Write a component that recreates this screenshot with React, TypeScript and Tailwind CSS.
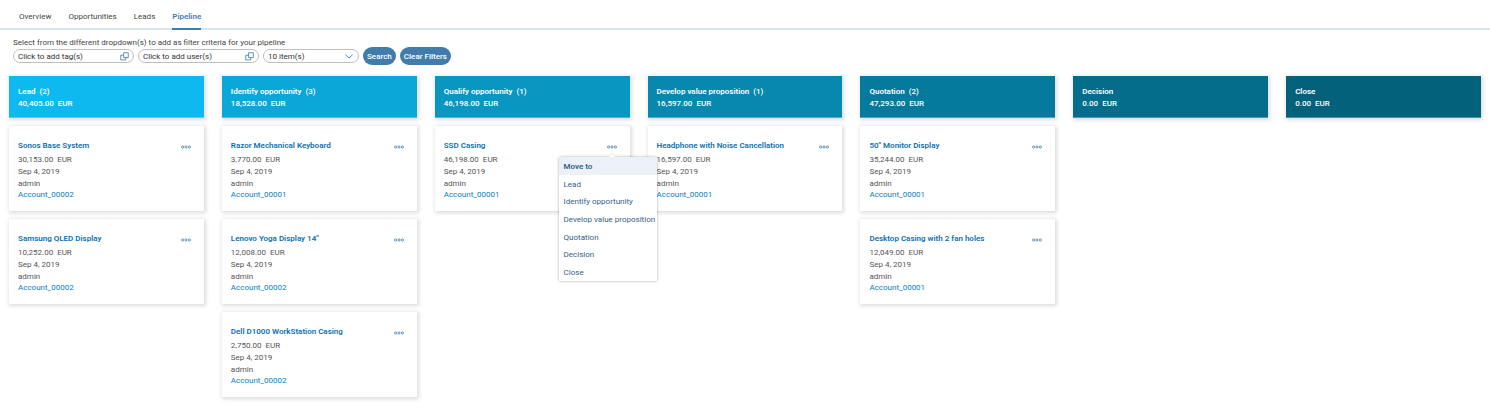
import React from "react";

type Deal = { name: string; amount: string; account: string; menuOpen?: boolean };
type Stage = { name: string; total: string; tone: string; deals: Deal[] };

const stages: Stage[] = [
  {
    name: "Lead",
    total: "40,405.00",
    tone: "bg-[#0db9ef]",
    deals: [
      { name: "Sonos Base System", amount: "30,153.00", account: "Account_00002" },
      { name: "Samsung QLED Display", amount: "10,252.00", account: "Account_00002" },
    ],
  },
  {
    name: "Identify opportunity",
    total: "18,528.00",
    tone: "bg-[#0ba7d8]",
    deals: [
      { name: "Razor Mechanical Keyboard", amount: "3,770.00", account: "Account_00001" },
      { name: 'Lenovo Yoga Display 14"', amount: "12,008.00", account: "Account_00002" },
      { name: "Dell D1000 WorkStation Casing", amount: "2,750.00", account: "Account_00002" },
    ],
  },
  {
    name: "Qualify opportunity",
    total: "46,198.00",
    tone: "bg-[#0996c1]",
    deals: [{ name: "SSD Casing", amount: "46,198.00", account: "Account_00001", menuOpen: true }],
  },
  {
    name: "Develop value proposition",
    total: "16,597.00",
    tone: "bg-[#0788ae]",
    deals: [{ name: "Headphone with Noise Cancellation", amount: "16,597.00", account: "Account_00001" }],
  },
  {
    name: "Quotation",
    total: "47,293.00",
    tone: "bg-[#067a9c]",
    deals: [
      { name: '50" Monitor Display', amount: "35,244.00", account: "Account_00001" },
      { name: "Desktop Casing with 2 fan holes", amount: "12,049.00", account: "Account_00001" },
    ],
  },
  { name: "Decision", total: "0.00", tone: "bg-[#056d8c]", deals: [] },
  { name: "Close", total: "0.00", tone: "bg-[#04617c]", deals: [] },
];

const tabs = ["Overview", "Opportunities", "Leads", "Pipeline"];
const targets = ["Lead", "Identify opportunity", "Develop value proposition", "Quotation", "Decision", "Close"];

function ValueHelpIcon() {
  return (
    <svg viewBox="0 0 10 10" className="size-[9px] text-[#427cac]" fill="none" stroke="currentColor" strokeWidth=".9">
      <path d="M4 .8h5.2v5.4H4z" />
      <path d="M4 3.6H.8v5.2h5.6V6.2" />
    </svg>
  );
}

function PickerField({ id, label }: { id: string; label: string }) {
  return (
    <div className="flex h-[14px] w-[121px] items-center rounded-full border border-[#bfbfbf] bg-white pr-1 pl-1">
      <input
        id={id}
        aria-label={label}
        placeholder={label}
        className="min-w-0 flex-1 bg-transparent pt-px text-[8px] leading-3 outline-none placeholder:text-[#333]"
      />
      <button type="button" aria-label={`Browse: ${label}`}>
        <ValueHelpIcon />
      </button>
    </div>
  );
}

function MoveMenu() {
  return (
    <div
      role="menu"
      className="absolute top-3 -left-12 z-10 grid h-[124px] w-[98px] grid-cols-1 grid-rows-7 rounded-xs bg-white text-[8px] text-[#346187] shadow-[0_0_3px_rgba(0,0,0,0.35)]"
    >
      <svg viewBox="0 0 8 4" className="absolute -top-1 left-[49px] h-1 w-2">
        <path d="M0 4 4 .5 8 4" fill="#fff" stroke="#d0d4d8" strokeWidth=".6" />
      </svg>
      <div className="flex items-center rounded-t-xs bg-[#ebf1f6] px-[5px] pt-[2px] font-semibold">Move to</div>
      {targets.map((target) => (
        <button
          key={target}
          type="button"
          role="menuitem"
          className="flex w-full items-center pt-[2px] pl-[5px] whitespace-nowrap"
        >
          {target}
        </button>
      ))}
    </div>
  );
}

function DealCard({ deal }: { deal: Deal }) {
  return (
    <article className="h-[85px] bg-white px-[9px] pt-[14px] shadow-[1px_1px_4px_1px_rgba(0,0,0,0.14)]">
      <div className="flex items-start justify-between">
        <h3 className="font-semibold text-[#0c70b4]">{deal.name}</h3>
        <div className="relative mt-[5px] mr-1">
          <button type="button" aria-label={`Actions for ${deal.name}`} className="flex h-1 items-center">
            <svg viewBox="0 0 10 4" className="h-1 w-[10px]" fill="none" stroke="#427cac" strokeWidth=".8">
              <circle cx="1.6" cy="2" r="1.1" />
              <circle cx="5" cy="2" r="1.1" />
              <circle cx="8.4" cy="2" r="1.1" />
            </svg>
          </button>
          {deal.menuOpen && <MoveMenu />}
        </div>
      </div>
      <div className="mt-[2px] whitespace-pre">{deal.amount}  EUR</div>
      <div>Sep 4, 2019</div>
      <div>admin</div>
      <a href="#account" className="block leading-[10px] text-[#0a7ec0]">
        {deal.account}
      </a>
    </article>
  );
}

function StageColumn({ stage }: { stage: Stage }) {
  return (
    <section className="mx-[9px] flex min-w-0 flex-col gap-2">
      <header
        className={`h-[42px] border-b border-white/30 px-[9px] pt-[10px] text-white shadow-[1px_1px_4px_1px_rgba(0,0,0,0.14)] ${stage.tone}`}
      >
        <h2 className="font-semibold whitespace-pre">
          {stage.name}
          {stage.deals.length > 0 && <span className="font-medium">{`  (${stage.deals.length})`}</span>}
        </h2>
        <div className="font-medium whitespace-pre">{stage.total}  EUR</div>
      </header>
      {stage.deals.map((deal) => (
        <DealCard key={deal.name} deal={deal} />
      ))}
    </section>
  );
}

export default function App() {
  return (
    <div className="min-h-screen bg-white font-[Roboto,sans-serif] text-[8px] leading-3 text-[#555]">
      <nav className="flex gap-[17px] border-b-2 border-[#d9e4ec] px-[19px] pt-[11px] text-[#444]">
        {tabs.map((tab) => (
          <a
            key={tab}
            href={`#${tab.toLowerCase()}`}
            className={
              tab === "Pipeline"
                ? "-mb-[2px] border-b-2 border-[#427cac] pb-[5px] font-semibold text-[#427cac]"
                : "pb-[5px]"
            }
          >
            {tab}
          </a>
        ))}
      </nav>

      <form className="px-[13px] pt-[7px]" onSubmit={(event) => event.preventDefault()}>
        <p className="text-[#444]">
          Select from the different dropdown(s) to add as filter criteria for your pipeline
        </p>
        <div className="-mt-[2px] flex items-center gap-1 text-[#333]">
          <PickerField id="tags" label="Click to add tag(s)" />
          <PickerField id="users" label="Click to add user(s)" />
          <div className="relative flex h-[14px] w-[96px] items-center rounded-full border border-[#bfbfbf] bg-white">
            <select
              aria-label="Items"
              className="w-full appearance-none bg-transparent pt-px pl-1 text-[8px] leading-3 outline-none"
            >
              <option>10 item(s)</option>
            </select>
            <svg
              viewBox="0 0 8 5"
              className="pointer-events-none absolute right-[5px] h-[5px] w-2"
              fill="none"
              stroke="#427cac"
              strokeWidth=".9"
            >
              <path d="M.5.8 4 4 7.500.8" />
            </svg>
          </div>
          <button type="submit" className="h-[18px] rounded-full bg-[#427cac] px-1 pt-px font-medium text-white">
            Search
          </button>
          <button type="reset" className="h-[18px] rounded-full bg-[#427cac] px-1 pt-px font-medium text-white">
            Clear Filters
          </button>
        </div>
      </form>

      <main className="grid grid-cols-7 items-start pt-[11px]">
        {stages.map((stage) => (
          <StageColumn key={stage.name} stage={stage} />
        ))}
      </main>
    </div>
  );
}
